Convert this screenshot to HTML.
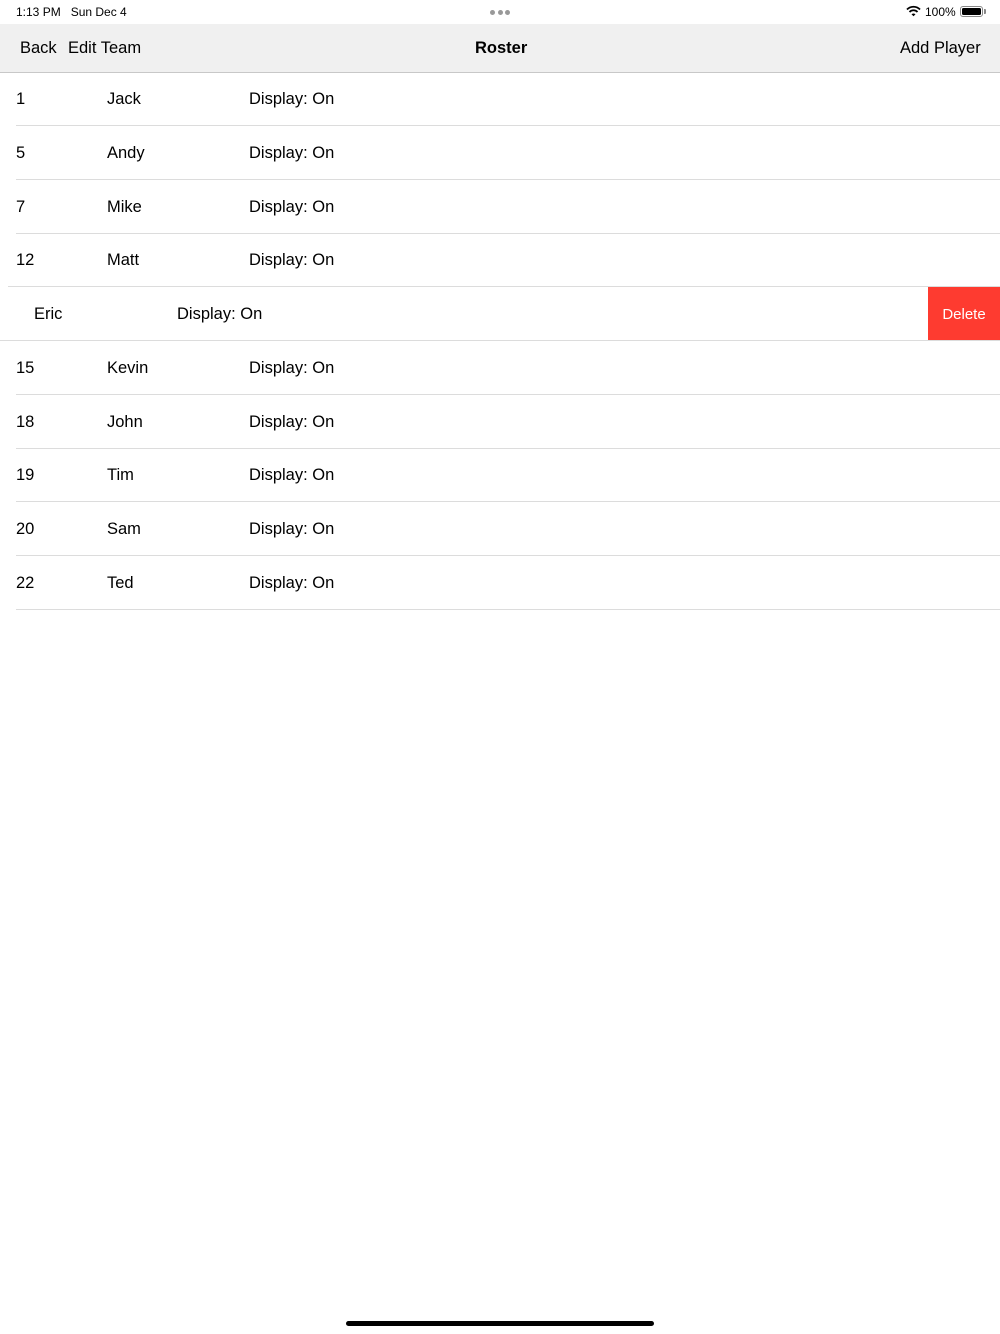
<!DOCTYPE html>
<html><head><meta charset="utf-8"><style>
*{margin:0;padding:0;box-sizing:border-box}
body{width:1000px;height:1334px;background:#fff;position:relative;overflow:hidden;font-family:"Liberation Sans",sans-serif;color:#000}
.a{position:absolute;white-space:nowrap}
.st{font-size:12px;top:5px}
.nav{position:absolute;left:0;top:24px;width:1000px;height:49px;background:#f0f0f0;border-bottom:1px solid #c8c8c8}
.nt{position:absolute;font-size:16.5px;top:15px}
.row{position:absolute;left:0;width:1000px;height:54px}
.row .t{position:absolute;top:18px;font-size:16.5px}
.sep{position:absolute;left:16px;right:0;bottom:0;height:1px;background:#dcdcdc}
</style></head><body>
<div class="a st" style="left:16px">1:13 PM&nbsp;&nbsp;&nbsp;Sun Dec 4</div>
<div class="a" style="left:490px;top:10px;width:20px;height:4px">
<span style="position:absolute;left:0;top:0;width:5px;height:5px;border-radius:50%;background:#999"></span>
<span style="position:absolute;left:7.5px;top:0;width:5px;height:5px;border-radius:50%;background:#999"></span>
<span style="position:absolute;left:15px;top:0;width:5px;height:5px;border-radius:50%;background:#999"></span>
</div>
<svg class="a" style="left:906px;top:5px" width="15" height="12" viewBox="0 0 15 12"><path d="M1 4.5a9 9 0 0 1 13 0" stroke="#000" stroke-width="1.8" fill="none"/><path d="M3.5 7a5.5 5.5 0 0 1 8 0" stroke="#000" stroke-width="1.8" fill="none"/><path d="M5.5 9.3l2 2 2-2a2.8 2.8 0 0 0-4 0z" fill="#000"/></svg>
<div class="a st" style="left:925px">100%</div>
<div class="a" style="left:960px;top:6px;width:23px;height:11px;border:1px solid #888;border-radius:3px;padding:1px"><div style="width:100%;height:100%;background:#000;border-radius:1.5px"></div></div>
<div class="a" style="left:984px;top:9px;width:2px;height:5px;background:#888;border-radius:0 1px 1px 0"></div>
<div class="nav">
<div class="nt" style="left:20px">Back</div>
<div class="nt" style="left:68px">Edit Team</div>
<div class="nt" style="left:475px;font-weight:bold">Roster</div>
<div class="nt" style="left:900px">Add Player</div>
</div>

<div class="row" style="top:72px"><span class="t" style="left:16px">1</span><span class="t" style="left:107px">Jack</span><span class="t" style="left:249px">Display: On</span><div class="sep"></div></div>
<div class="row" style="top:126px"><span class="t" style="left:16px">5</span><span class="t" style="left:107px">Andy</span><span class="t" style="left:249px">Display: On</span><div class="sep"></div></div>
<div class="row" style="top:180px"><span class="t" style="left:16px">7</span><span class="t" style="left:107px">Mike</span><span class="t" style="left:249px">Display: On</span><div class="sep"></div></div>
<div class="row" style="top:233px"><span class="t" style="left:16px">12</span><span class="t" style="left:107px">Matt</span><span class="t" style="left:249px">Display: On</span><div class="sep" style="left:8px"></div></div>
<div class="row" style="top:287px"><span class="t" style="left:34px">Eric</span><span class="t" style="left:177px">Display: On</span><div class="sep" style="left:0"></div>
<div style="position:absolute;left:928px;top:0;width:72px;height:53px;background:#fe3b30;color:#fff;font-size:15px;text-align:center;line-height:55px">Delete</div></div>
<div class="row" style="top:341px"><span class="t" style="left:16px">15</span><span class="t" style="left:107px">Kevin</span><span class="t" style="left:249px">Display: On</span><div class="sep"></div></div>
<div class="row" style="top:395px"><span class="t" style="left:16px">18</span><span class="t" style="left:107px">John</span><span class="t" style="left:249px">Display: On</span><div class="sep"></div></div>
<div class="row" style="top:448px"><span class="t" style="left:16px">19</span><span class="t" style="left:107px">Tim</span><span class="t" style="left:249px">Display: On</span><div class="sep"></div></div>
<div class="row" style="top:502px"><span class="t" style="left:16px">20</span><span class="t" style="left:107px">Sam</span><span class="t" style="left:249px">Display: On</span><div class="sep"></div></div>
<div class="row" style="top:556px"><span class="t" style="left:16px">22</span><span class="t" style="left:107px">Ted</span><span class="t" style="left:249px">Display: On</span><div class="sep"></div></div>

<div class="a" style="left:346px;top:1321px;width:308px;height:5px;border-radius:3px;background:#000"></div>
</body></html>
